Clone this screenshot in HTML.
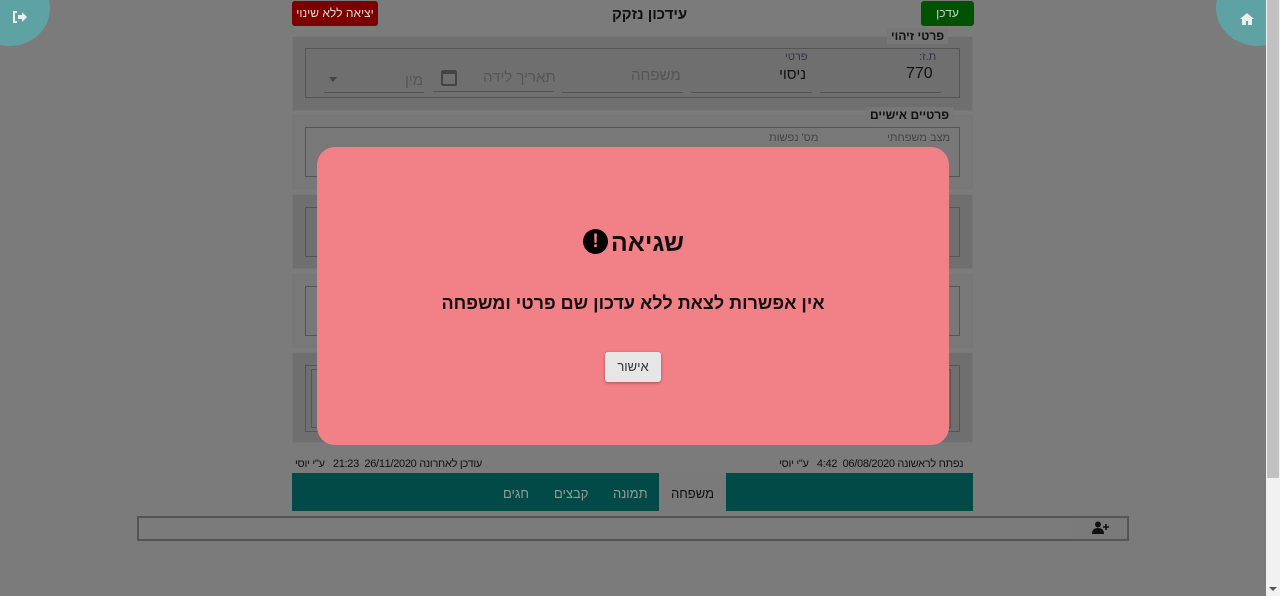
<!DOCTYPE html>
<html><head><meta charset="utf-8"><style>
*{box-sizing:border-box;margin:0;padding:0}
body{width:1280px;height:596px;overflow:hidden;background:#7b7b7b;font-family:"Liberation Sans","Noto Sans CJK SC",sans-serif;position:relative;color:#111}
.a{position:absolute}
.sec{position:absolute;left:292px;width:681px;background:#6f6f6f;border:1px solid #777}
.sec.l{background:#787878}
.box{position:absolute;border:1px solid #555}
.lbl{position:absolute;background:#777;font-size:12px;font-weight:bold;padding:1px 4px;direction:rtl}
.ul{position:absolute;border-bottom:1px solid #555;height:1px}
.t{position:absolute;direction:rtl;white-space:nowrap}
</style></head><body>
<div class="a" style="left:-30px;top:-30px;width:80px;height:76px;border-radius:50%;background:#5fa2a3"></div>
<svg class="a" style="left:12px;top:10px" width="16" height="14" viewBox="0 0 16 14"><path d="M5 2H2v10h3" stroke="#eee" stroke-width="2" fill="none"/><path d="M6 5h4V2l5 5-5 5V9H6z" fill="#eee"/></svg>
<div class="a" style="left:1216px;top:-30px;width:84px;height:76px;border-radius:50%;background:#5fa2a3"></div>
<svg class="a" style="left:1239px;top:12px" width="16" height="14" viewBox="0 0 16 14"><path d="M8 1L1 7h2v6h4V9h2v4h4V7h2z" fill="#eee"/></svg>
<div class="a" style="left:1266px;top:0;width:14px;height:596px;background:#f1f1f1"></div>
<div class="a" style="left:1267px;top:0;width:12px;height:478px;background:#c1c1c1"></div>
<div class="a" style="left:1269px;top:587px;border:4px solid transparent;border-top:4px solid #555"></div>

<div class="a" style="left:292px;top:1px;width:86px;height:25px;background:#7d0000;border-radius:3px;color:#ddd;font-size:12px;text-align:center;line-height:25px;direction:rtl">יציאה ללא שינוי</div>
<div class="t" style="left:612px;top:6px;font-size:15px;font-weight:bold">עידכון נזקק</div>
<div class="a" style="left:921px;top:1px;width:53px;height:25px;background:#005200;border-radius:3px;color:#ccc;font-size:12px;text-align:center;line-height:25px">עדכן</div>

<div class="sec" style="top:36px;height:75px"></div>
<div class="box" style="left:305px;top:48px;width:655px;height:50px"></div>
<div class="lbl" style="left:887px;top:28px">פרטי זיהוי</div>
<div class="t" style="left:919px;top:51px;font-size:11px;color:#334">ת.ז:</div>
<div class="t" style="left:906px;top:65px;font-size:16px">770</div>
<div class="ul" style="left:820px;top:92px;width:121px"></div>
<div class="t" style="left:785px;top:51px;font-size:11px;color:#334">פרטי</div>
<div class="t" style="left:779px;top:66px;font-size:15px">ניסוי</div>
<div class="ul" style="left:691px;top:92px;width:121px"></div>
<div class="t" style="left:631px;top:67px;font-size:15px;color:#555">משפחה</div>
<div class="ul" style="left:562px;top:92px;width:121px"></div>
<div class="t" style="left:483px;top:69px;font-size:15px;color:#555">תאריך לידה</div>
<div class="a" style="left:441px;top:70px;width:16px;height:16px;border:2px solid #444;border-top-width:4px;border-radius:2px"></div>
<div class="ul" style="left:433px;top:91px;width:121px"></div>
<div class="t" style="left:405px;top:72px;font-size:15px;color:#555">מין</div>
<div class="a" style="left:329px;top:77px;border:4px solid transparent;border-top:5px solid #444"></div>
<div class="ul" style="left:324px;top:92px;width:100px"></div>

<div class="sec l" style="top:115px;height:74px"></div>
<div class="box" style="left:305px;top:127px;width:655px;height:50px"></div>
<div class="lbl" style="left:866px;top:107px">פרטיים אישיים</div>
<div class="t" style="left:887px;top:132px;font-size:11px;color:#444">מצב משפחתי</div>
<div class="t" style="left:769px;top:132px;font-size:11px;color:#444">מס' נפשות</div>

<div class="sec" style="top:194px;height:75px"></div>
<div class="box" style="left:305px;top:207px;width:655px;height:50px"></div>
<div class="sec l" style="top:274px;height:74px"></div>
<div class="box" style="left:305px;top:286px;width:655px;height:50px"></div>
<div class="sec" style="top:352px;height:91px"></div>
<div class="box" style="left:305px;top:365px;width:655px;height:67px"></div>
<div class="box" style="left:311px;top:369px;width:640px;height:59px"></div>

<div class="t" style="left:779px;top:458px;font-size:11px;letter-spacing:-0.3px">נפתח לראשונה 06/08/2020&nbsp; 4:42 &nbsp; ע"י יוסי</div>
<div class="t" style="left:295px;top:458px;font-size:11px;letter-spacing:-0.3px">עודכן לאחרונה 26/11/2020&nbsp; 21:23 &nbsp; ע"י יוסי</div>
<div class="a" style="left:292px;top:473px;width:681px;height:38px;background:#024a48"></div>
<div class="a" style="left:659px;top:473px;width:67px;height:38px;background:#7a7a7a"></div>
<div class="t" style="left:671px;top:486px;font-size:13px">משפחה</div>
<div class="t" style="left:613px;top:486px;font-size:13px;color:#999">תמונה</div>
<div class="t" style="left:554px;top:486px;font-size:13px;color:#999">קבצים</div>
<div class="t" style="left:503px;top:486px;font-size:13px;color:#999">חגים</div>
<div class="a" style="left:137px;top:516px;width:992px;height:25px;border:2px solid #555"></div>
<div class="a" style="left:1073px;top:518px;width:54px;height:21px;background:#7a7a7a"></div>
<svg class="a" style="left:1092px;top:521px" width="17" height="14" viewBox="0 0 17 14"><circle cx="6" cy="3.5" r="3" fill="#111"/><path d="M0 13c0-4 2-6 6-6s6 2 6 6z" fill="#111"/><path d="M14 3v6M11 6h6" stroke="#111" stroke-width="1.6"/></svg>

<div class="a" style="left:317px;top:147px;width:632px;height:298px;background:#f28187;border-radius:18px"></div>
<div class="t" style="left:582px;top:229px;font-size:25px;font-weight:bold;width:102px;text-align:right">שגיאה</div>
<div class="a" style="left:583px;top:229px;width:25px;height:25px;border-radius:50%;background:#000;color:#f28187;font-weight:bold;font-size:19px;line-height:25px;text-align:center">!</div>
<div class="t" style="left:317px;top:293px;width:632px;text-align:center;font-size:18px;font-weight:bold">אין אפשרות לצאת ללא עדכון שם פרטי ומשפחה</div>
<div class="a" style="left:605px;top:352px;width:56px;height:30px;background:#e6e6e6;border-radius:3px;box-shadow:0 1px 3px rgba(0,0,0,.35);font-size:13px;text-align:center;line-height:30px;color:#333">אישור</div>
</body></html>
